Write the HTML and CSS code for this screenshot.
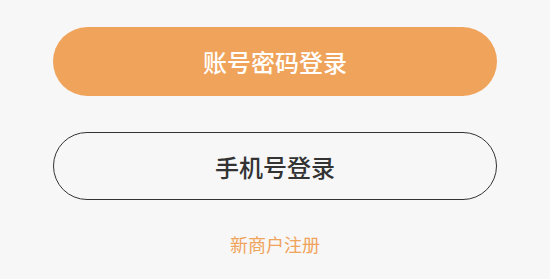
FILE: index.html
```html
<!DOCTYPE html>
<html>
<head>
    <meta http-equiv="Content-Type" content="text/html; charset=UTF-8">
    <link rel="stylesheet" href="styles.css">
</head>
<body>
    <div class="login">
        <button class="btn btn-primary">账号密码登录</button>
        <button class="btn btn-outline">手机号登录</button>
        <a class="register" href="#">新商户注册</a>
    </div>
</body>
</html>
```

FILE: styles.css
```css
html, body {
    margin: 0;
    background-color: #f7f7f7;
}

.login {
    display: flex;
    flex-direction: column;
    align-items: center;
    padding: 27px 53px 0;
    font-family: "Noto Sans CJK SC", "Noto Sans", sans-serif;
}

.btn {
    width: 100%;
    height: 69px;
    border-radius: 35px;
    font-family: inherit;
    font-size: 24px;
    font-weight: 500;
    cursor: pointer;
    box-sizing: border-box;
}

.btn-primary {
    background-color: #f0a35b;
    color: #fff;
    border: none;
}

.btn-outline {
    margin-top: 36px;
    height: 68px;
    background-color: transparent;
    color: #333;
    border: 1px solid #333;
}

.register {
    margin-top: 31px;
    font-size: 18px;
    line-height: 26px;
    color: #f0a35b;
    text-decoration: none;
}
```
